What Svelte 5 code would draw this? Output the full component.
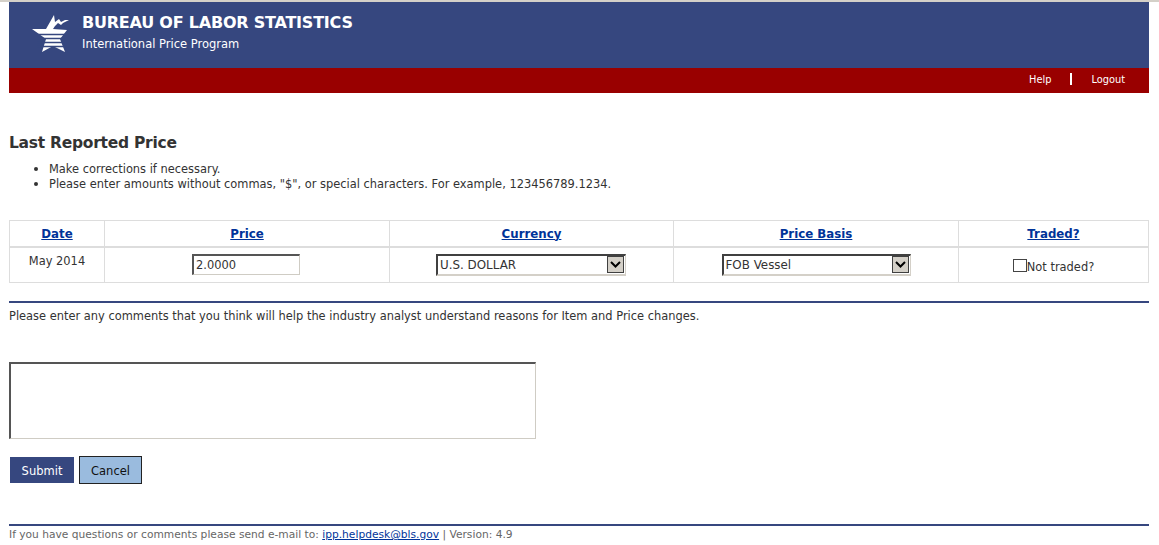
<script>
    const columns = ["Date", "Price", "Currency", "Price Basis", "Traded?"];

    let price = "2.0000";
    let currency = "U.S. DOLLAR";
    let basis = "FOB Vessel";
    let notTraded = false;
    let comments = "";
</script>

<div class="page">
    <header class="banner">
        <svg class="logo" width="38" height="40" viewBox="0 0 38 40" aria-hidden="true">
            <path d="M0 16 L14 16 L22 2 L23 9 L27 6 L29 9 L33 7 L37 7 L31 10 L29 12 L26 10 L23 13 L21 16 L35 17 L28 26 L33 39 L21 33 L10 39 L14 26 Z" fill="#fff" />
            <path d="M5 21.500 H33 M5 25.500 H33 M5 29.500 H33 M5 33.500 H33" stroke="#36477f" stroke-width="1.500" />
        </svg>
        <div class="titles">
            <div class="agency">BUREAU OF LABOR STATISTICS</div>
            <div class="program">International Price Program</div>
        </div>
    </header>
    <nav class="redbar">
        <a href="#help">Help</a>
        <span class="sep"></span>
        <a href="#logout">Logout</a>
    </nav>

    <h1>Last Reported Price</h1>
    <ul>
        <li>Make corrections if necessary.</li>
        <li>Please enter amounts without commas, "$", or special characters. For example, 123456789.1234.</li>
    </ul>

    <table>
        <thead>
            <tr>
                {#each columns as col}
                    <th><a href="#sort">{col}</a></th>
                {/each}
            </tr>
        </thead>
        <tbody>
            <tr>
                <td class="date">May 2014</td>
                <td><input class="price" type="text" bind:value={price} /></td>
                <td>
                    <div class="select wide">
                        <span>{currency}</span>
                        <i class="arrow">
                            <svg width="13" height="9" viewBox="0 0 13 9"><path d="M2 2 L6.500 6.500 L11 2" fill="none" stroke="#000" stroke-width="2" /></svg>
                        </i>
                    </div>
                </td>
                <td>
                    <div class="select wider">
                        <span>{basis}</span>
                        <i class="arrow">
                            <svg width="13" height="9" viewBox="0 0 13 9"><path d="M2 2 L6.500 6.500 L11 2" fill="none" stroke="#000" stroke-width="2" /></svg>
                        </i>
                    </div>
                </td>
                <td class="traded">
                    <label><input type="checkbox" bind:checked={notTraded} />Not traded?</label>
                </td>
            </tr>
        </tbody>
    </table>

    <hr class="rule-one" />
    <p class="hint">Please enter any comments that you think will help the industry analyst understand reasons for Item and Price changes.</p>

    <textarea bind:value={comments}></textarea>

    <div class="buttons">
        <button class="submit">Submit</button>
        <button class="cancel">Cancel</button>
    </div>

    <hr class="rule-two" />
    <footer>If you have questions or comments please send e-mail to: <a href="#mail">ipp.helpdesk@bls.gov</a> | Version: 4.9</footer>
</div>

<style>
    :global(body) {
        margin: 0;
        background: #fff;
    }

    .page {
        border-top: 2px solid #d4d0c8;
        padding: 0 10px 0 9px;
        font-family: "DejaVu Sans", Verdana, sans-serif;
        font-size: 11.430px;
        color: #333;
        height: 543px;
        overflow: hidden;
    }

    .banner {
        height: 66px;
        background: #36477f;
        display: flex;
        color: #fff;
    }

    .logo {
        margin: 11px 0 0 23px;
    }

    .titles {
        margin-left: 12px;
    }

    .agency {
        margin-top: 11px;
        font-size: 16px;
        font-weight: bold;
        line-height: 20px;
        letter-spacing: -0.220px;
    }

    .program {
        margin-top: 3px;
        font-size: 11.500px;
        line-height: 16px;
    }

    .redbar {
        box-sizing: border-box;
        height: 25px;
        background: #990000;
        display: flex;
        justify-content: flex-end;
        align-items: center;
        padding: 0 24px 3px 0;
    }

    .redbar a {
        color: #fff;
        text-decoration: none;
        font-size: 9.800px;
    }

    .sep {
        width: 2px;
        height: 12px;
        background: #fff;
        margin: 0 19px 0 19px;
    }

    h1 {
        margin: 39px 0 0;
        font-size: 15.500px;
        line-height: 22px;
        font-weight: bold;
        letter-spacing: -0.260px;
        color: #333;
    }

    ul {
        margin: 7px 0 0;
        padding-left: 40px;
    }

    li {
        height: 15px;
        line-height: 15px;
    }

    li::marker {
        font-size: 13px;
    }

    table {
        margin-top: 29px;
        width: 1140px;
        border-collapse: collapse;
        table-layout: fixed;
    }

    th, td {
        border: 1px solid #ddd;
        text-align: center;
        padding: 0;
    }

    th {
        height: 25px;
        border-bottom-width: 2px;
        font-size: 11.800px;
    }

    th:nth-child(1) {
        width: 94px;
    }

    th:nth-child(2), th:nth-child(4) {
        width: 284px;
    }

    th:nth-child(3) {
        width: 283px;
    }

    th a {
        color: #003399;
    }

    td {
        height: 34px;
    }

    .date {
        vertical-align: top;
        padding-top: 6px;
        height: 28px;
    }

    input.price {
        box-sizing: border-box;
        width: 108px;
        height: 21px;
        margin: 0 2px 1px 0;
        padding: 1px 2px;
        font: inherit;
        color: #333;
        border: 1px solid #cfccc4;
        border-top: 2px solid #555;
        border-left: 2px solid #555;
        outline: none;
    }

    .select {
        box-sizing: border-box;
        display: inline-flex;
        justify-content: space-between;
        align-items: center;
        height: 22px;
        margin-bottom: 1px;
        padding-left: 2px;
        background: #fff;
        font-size: 11.900px;
        border-top: 2px solid #404040;
        border-left: 2px solid #404040;
        border-right: 1px solid #d4d0c8;
        border-bottom: 2px solid #d4d0c8;
        text-align: left;
        vertical-align: middle;
    }

    .wide {
        width: 190px;
        margin-right: 1px;
    }

    .wider {
        width: 189px;
    }

    .arrow {
        box-sizing: border-box;
        width: 17px;
        height: 17px;
        margin-right: 1px;
        background: #d4d0c8;
        border: 1px solid #404040;
        display: flex;
        align-items: center;
        justify-content: center;
    }

    .traded label {
        display: inline-flex;
        align-items: flex-end;
        padding-top: 3px;
    }

    .traded input {
        appearance: none;
        box-sizing: border-box;
        width: 14px;
        height: 13px;
        margin: 0 0 2px;
        border: 1px solid #444;
        background: #fff;
    }

    hr {
        height: 2px;
        border: 0;
        background: #36477f;
        margin: 0;
    }

    .rule-one {
        margin-top: 18px;
    }

    .hint {
        margin: 6px 0 0;
        line-height: 15px;
    }

    textarea {
        display: block;
        box-sizing: border-box;
        width: 527px;
        height: 77px;
        margin-top: 38px;
        padding: 2px;
        resize: none;
        outline: none;
        border: 1px solid #cfccc4;
        border-top: 2px solid #555;
        border-left: 2px solid #555;
    }

    .buttons {
        display: flex;
        gap: 5px;
        margin-top: 17px;
        padding-left: 1px;
    }

    button {
        box-sizing: border-box;
        font: inherit;
        font-size: 11.500px;
        padding: 1px 0 0;
    }

    .submit {
        width: 64px;
        margin-top: 1px;
        height: 26px;
        background: #36477f;
        color: #fff;
        border: 0;
    }

    .cancel {
        width: 63px;
        height: 28px;
        background: #9abbde;
        color: #111;
        border: 1px solid #222;
    }

    .rule-two {
        margin-top: 40px;
    }

    footer {
        margin-top: 2px;
        font-size: 10.670px;
        line-height: 14px;
        color: #666;
    }

    footer a {
        color: #003399;
    }
</style>
